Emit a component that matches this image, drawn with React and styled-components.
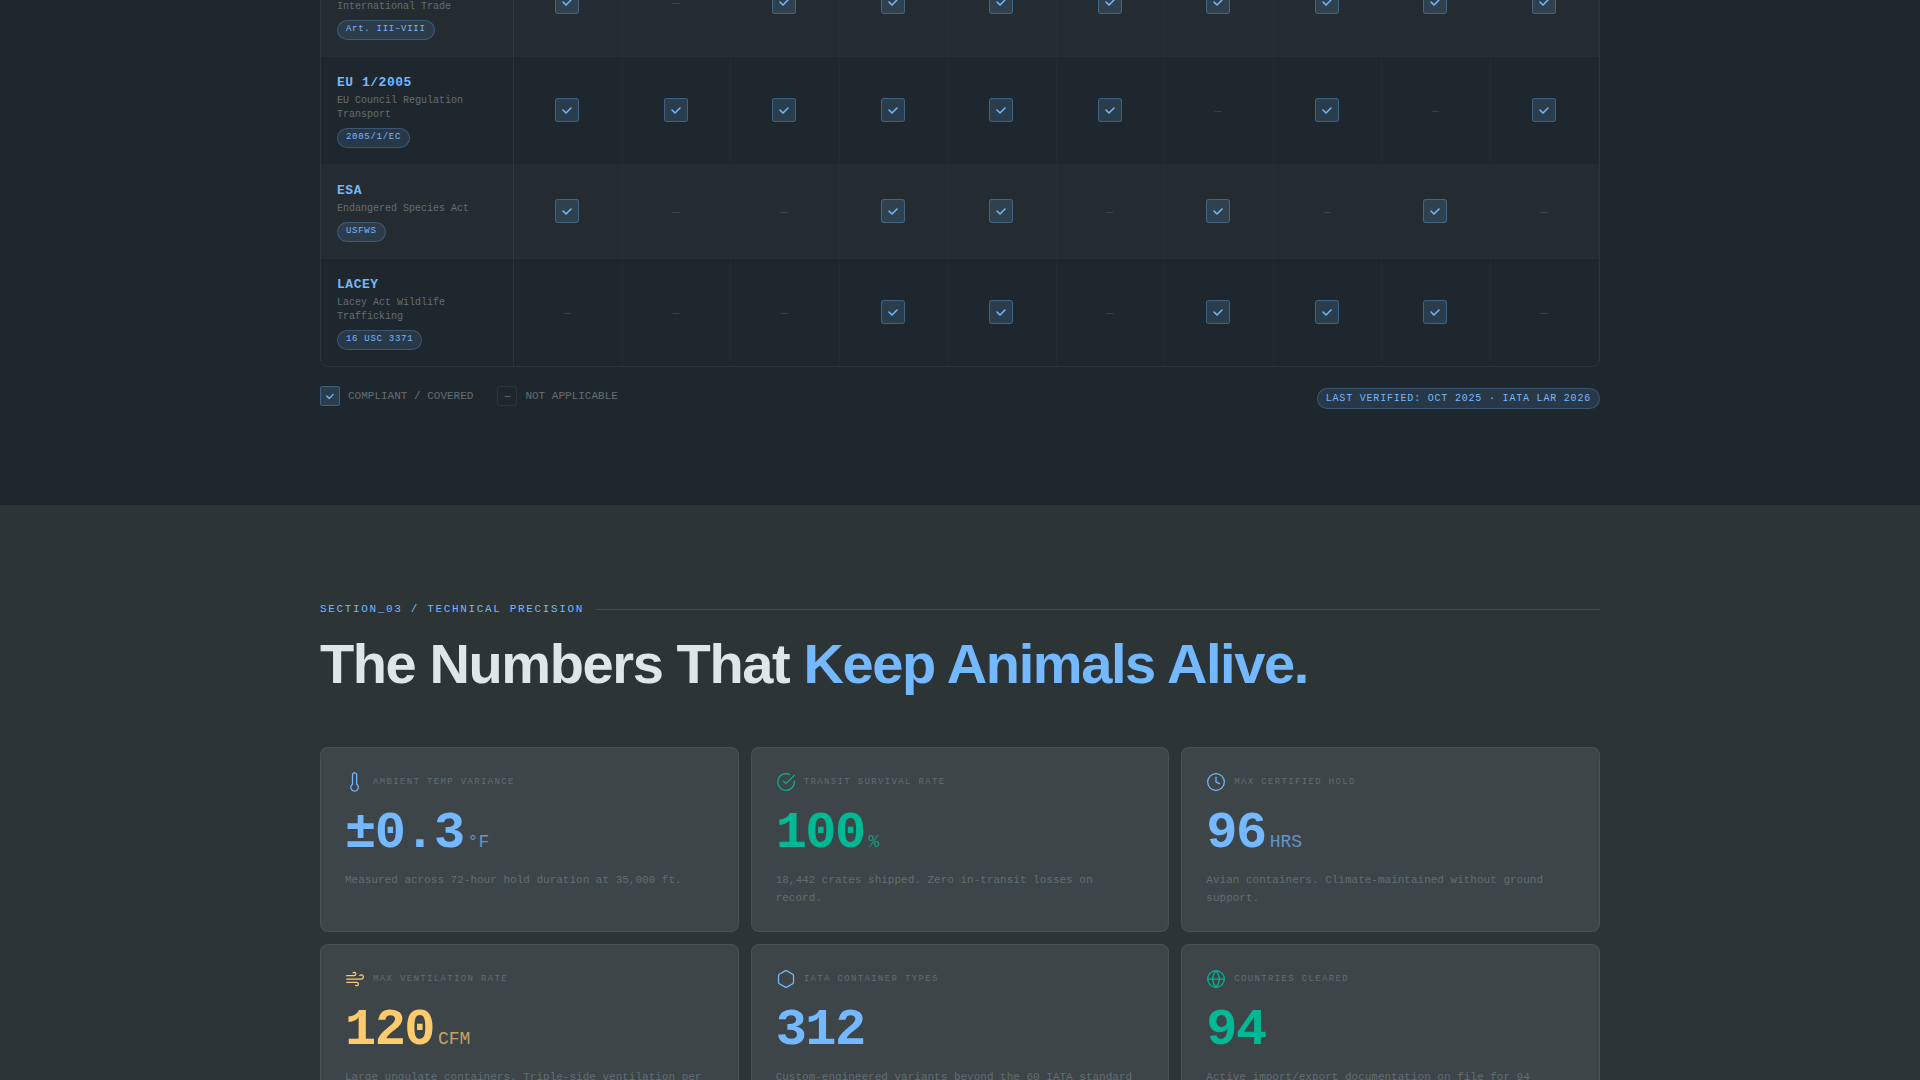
import React from 'react';
import styled, { createGlobalStyle } from 'styled-components';

const GlobalStyle = createGlobalStyle`
  :root {
    --ink: #1e272e;
    --slate: #2d3436;
    --muted: #636e72;
    --light: #dfe6e9;
    --blue: #74b9ff;
    --green: #00b894;
    --amber: #fdcb6e;
    --sans: 'Liberation Sans', Arial, sans-serif;
    --mono: 'Liberation Mono', 'Courier New', monospace;
  }

  * {
    box-sizing: border-box;
  }

  body {
    margin: 0;
    background: var(--ink);
    color: var(--light);
    font-family: var(--sans);
  }
`;

const Page = styled.main`
  height: 100vh;
  overflow: hidden;
`;

const Container = styled.div`
  max-width: 1280px;
  margin: 0 auto;
`;

const MatrixSection = styled.section`
  background: var(--ink);
  padding-bottom: 96px;
  overflow: hidden;
`;

const MatrixFrame = styled.div`
  margin-top: -52px;
  border: 1px solid rgba(99, 110, 114, 0.2);
  border-radius: 8px;
  overflow: hidden;
`;

const Matrix = styled.table`
  width: 100%;
  table-layout: fixed;
  border-collapse: separate;
  border-spacing: 0;
  font-family: var(--mono);
`;

const MatrixRow = styled.tr`
  &:nth-child(odd) {
    background: rgba(45, 52, 54, 0.4);
  }

  &:not(:last-child) > * {
    border-bottom: 1px solid rgba(99, 110, 114, 0.06);
  }
`;

const RegulationCell = styled.th`
  width: 193px;
  padding: 16px;
  border-right: 1px solid rgba(99, 110, 114, 0.2);
  text-align: left;
  font-weight: 400;
`;

const StatusCell = styled.td`
  padding: 0 1px 2px 0;
  border-right: 1px solid rgba(99, 110, 114, 0.06);
  text-align: center;
  vertical-align: middle;
`;

const Code = styled.div`
  margin-bottom: 1px;
  color: var(--blue);
  font-size: 13px;
  font-weight: 700;
  line-height: 20px;
  letter-spacing: 0.04em;
`;

const FullName = styled.div`
  margin-bottom: 6px;
  color: var(--muted);
  font-size: 10px;
  line-height: 14px;
`;

const Tag = styled.span`
  display: block;
  width: fit-content;
  padding: ${({ $large }) => ($large ? '2px 8px' : '2px 8px 3px')};
  border: 1px solid rgba(116, 185, 255, 0.25);
  border-radius: 20px;
  background: rgba(116, 185, 255, 0.12);
  color: var(--blue);
  font-family: var(--mono);
  font-size: ${({ $large }) => ($large ? 10 : 9)}px;
  line-height: ${({ $large }) => ($large ? 15 : 13)}px;
  letter-spacing: 0.08em;
`;

const Mark = styled.span`
  display: flex;
  align-items: center;
  justify-content: center;
  width: ${({ $size }) => $size}px;
  height: ${({ $size }) => $size}px;
  margin: 0 auto;
  border: 1px solid
    ${({ $on }) => ($on ? 'rgba(116, 185, 255, 0.3)' : 'rgba(99, 110, 114, 0.2)')};
  border-radius: 3px;
  background: ${({ $on }) => ($on ? 'rgba(116, 185, 255, 0.15)' : 'transparent')};
  color: ${({ $on }) => ($on ? 'var(--blue)' : 'var(--muted)')};
  font-size: 10px;
`;

const Dash = styled.span`
  display: block;
  padding-top: 4px;
  color: var(--muted);
  font-size: 12px;
  opacity: 0.4;
`;

const MatrixFooter = styled.div`
  display: flex;
  align-items: flex-start;
  justify-content: space-between;
  margin-top: 19px;
`;

const Legend = styled.div`
  display: flex;
  gap: 24px;
`;

const LegendItem = styled.div`
  display: flex;
  align-items: center;
  gap: 8px;
  color: var(--muted);
  font-family: var(--mono);
  font-size: 11px;
`;

const Verified = styled.div`
  padding-top: 2px;
`;

const StatsSection = styled.section`
  padding: 96px 0;
  background: var(--slate);
`;

const SectionLabel = styled.div`
  display: flex;
  align-items: center;
  gap: 12px;
  margin-bottom: 16px;
  color: var(--blue);
  font-family: var(--mono);
  font-size: 11px;
  line-height: 16px;
  letter-spacing: 0.15em;

  &::after {
    content: '';
    flex: 1;
    height: 1px;
    background: rgba(116, 185, 255, 0.2);
  }
`;

const Title = styled.h2`
  margin: 0 0 52px;
  font-size: 56px;
  font-weight: 700;
  line-height: 62px;
  letter-spacing: -0.025em;

  em {
    color: var(--blue);
    font-style: normal;
  }
`;

const StatGrid = styled.div`
  display: grid;
  grid-template-columns: repeat(3, 1fr);
  gap: 12px;
`;

const StatCard = styled.article`
  padding: 24px;
  border: 1px solid rgba(99, 110, 114, 0.3);
  border-radius: 8px;
  background: #3d4548;
  font-family: var(--mono);
`;

const StatHead = styled.div`
  display: flex;
  align-items: center;
  gap: 8px;
  height: 20px;
  margin-bottom: 16px;
`;

const StatIcon = styled.svg`
  width: 20px;
  height: 20px;
  fill: none;
  stroke: var(--${({ $tone }) => $tone});
  stroke-width: 1.5;
  stroke-linecap: round;
  stroke-linejoin: round;
`;

const StatLabel = styled.h3`
  margin: 0;
  color: var(--muted);
  font-size: 9px;
  font-weight: 400;
  line-height: 14px;
  letter-spacing: 0.15em;
`;

const StatValue = styled.div`
  color: var(--${({ $tone }) => $tone});
  font-size: 52px;
  font-weight: 700;
  line-height: 52px;
  letter-spacing: -0.03em;
`;

const Unit = styled.span`
  margin-left: 4px;
  font-size: 18px;
  font-weight: 400;
  line-height: 18px;
  letter-spacing: 0;
  opacity: 0.7;
`;

const StatText = styled.p`
  margin: 12px 0 0;
  color: var(--muted);
  font-size: 11px;
  line-height: 1.6;
`;

const regulations = [
  { code: 'CITES', name: 'Convention on International Trade', tag: 'Art. III–VIII', marks: '1011111111' },
  { code: 'EU 1/2005', name: 'EU Council Regulation Transport', tag: '2005/1/EC', marks: '1111110101' },
  { code: 'ESA', name: 'Endangered Species Act', tag: 'USFWS', marks: '1001101010' },
  { code: 'LACEY', name: 'Lacey Act Wildlife Trafficking', tag: '16 USC 3371', marks: '0001101110' },
];

const icons = {
  thermometer: <path d="M14 14.76V3.5a2.5 2.5 0 0 0-5 0v11.26a4.5 4.5 0 1 0 5 0z" />,
  check: (
    <>
      <path d="M22 11.08V12a10 10 0 1 1-5.93-9.14" />
      <path d="M22 4 12 14.01l-3-3" />
    </>
  ),
  clock: (
    <>
      <circle cx="12" cy="12" r="10" />
      <path d="M12 6v6l4 2" />
    </>
  ),
  wind: (
    <path d="M9.59 4.59A2 2 0 1 1 11 8H2m10.59 11.41A2 2 0 1 0 14 16H2m15.73-8.27A2.5 2.5 0 1 1 19.5 12H2" />
  ),
  hexagon: (
    <path d="M21 16V8a2 2 0 0 0-1-1.73l-7-4a2 2 0 0 0-2 0l-7 4A2 2 0 0 0 3 8v8a2 2 0 0 0 1 1.73l7 4a2 2 0 0 0 2 0l7-4A2 2 0 0 0 21 16z" />
  ),
  globe: (
    <>
      <circle cx="12" cy="12" r="10" />
      <path d="M2 12h20" />
      <path d="M12 2a15.3 15.3 0 0 1 4 10 15.3 15.3 0 0 1-4 10 15.3 15.3 0 0 1-4-10 15.3 15.3 0 0 1 4-10z" />
    </>
  ),
};

const stats = [
  {
    icon: 'thermometer',
    tone: 'blue',
    label: 'AMBIENT TEMP VARIANCE',
    value: '±0.3',
    unit: '°F',
    text: 'Measured across 72-hour hold duration at 35,000 ft.',
  },
  {
    icon: 'check',
    tone: 'green',
    label: 'TRANSIT SURVIVAL RATE',
    value: '100',
    unit: '%',
    text: '18,442 crates shipped. Zero in-transit losses on record.',
  },
  {
    icon: 'clock',
    tone: 'blue',
    label: 'MAX CERTIFIED HOLD',
    value: '96',
    unit: 'HRS',
    text: 'Avian containers. Climate-maintained without ground support.',
  },
  {
    icon: 'wind',
    tone: 'amber',
    label: 'MAX VENTILATION RATE',
    value: '120',
    unit: 'CFM',
    text: 'Large ungulate containers. Triple-side ventilation per',
  },
  {
    icon: 'hexagon',
    tone: 'blue',
    label: 'IATA CONTAINER TYPES',
    value: '312',
    text: 'Custom-engineered variants beyond the 60 IATA standard',
  },
  {
    icon: 'globe',
    tone: 'green',
    label: 'COUNTRIES CLEARED',
    value: '94',
    text: 'Active import/export documentation on file for 94',
  },
];

const CheckMark = ({ size = 24 }) => (
  <Mark $on $size={size}>
    <svg
      width={size / 2}
      height={size / 2}
      viewBox="0 0 12 12"
      fill="none"
      stroke="currentColor"
      strokeWidth="1.5"
      strokeLinecap="round"
      strokeLinejoin="round"
    >
      <path d="M2 6l3 3 5-5" />
    </svg>
  </Mark>
);

const ComplianceMatrix = () => (
  <MatrixSection>
    <Container>
      <MatrixFrame>
        <Matrix>
          <tbody>
            {regulations.map(({ code, name, tag, marks }) => (
              <MatrixRow key={code}>
                <RegulationCell scope="row">
                  <Code>{code}</Code>
                  <FullName>{name}</FullName>
                  <Tag>{tag}</Tag>
                </RegulationCell>
                {marks.split('').map((mark, i) => (
                  <StatusCell key={i}>{mark === '1' ? <CheckMark /> : <Dash>—</Dash>}</StatusCell>
                ))}
              </MatrixRow>
            ))}
          </tbody>
        </Matrix>
      </MatrixFrame>
      <MatrixFooter>
        <Legend>
          <LegendItem>
            <CheckMark size={20} />
            COMPLIANT / COVERED
          </LegendItem>
          <LegendItem>
            <Mark $size={20}>—</Mark>
            NOT APPLICABLE
          </LegendItem>
        </Legend>
        <Verified>
          <Tag $large>LAST VERIFIED: OCT 2025 · IATA LAR 2026</Tag>
        </Verified>
      </MatrixFooter>
    </Container>
  </MatrixSection>
);

const TechnicalPrecision = () => (
  <StatsSection>
    <Container>
      <SectionLabel>SECTION_03 / TECHNICAL PRECISION</SectionLabel>
      <Title>
        The Numbers That <em>Keep Animals Alive.</em>
      </Title>
      <StatGrid>
        {stats.map(({ icon, tone, label, value, unit, text }) => (
          <StatCard key={label}>
            <StatHead>
              <StatIcon viewBox="0 0 24 24" $tone={tone} aria-hidden="true">
                {icons[icon]}
              </StatIcon>
              <StatLabel>{label}</StatLabel>
            </StatHead>
            <StatValue $tone={tone}>
              {value}
              {unit && <Unit>{unit}</Unit>}
            </StatValue>
            <StatText>{text}</StatText>
          </StatCard>
        ))}
      </StatGrid>
    </Container>
  </StatsSection>
);

const App = () => (
  <>
    <GlobalStyle />
    <Page>
      <ComplianceMatrix />
      <TechnicalPrecision />
    </Page>
  </>
);
export default App;
